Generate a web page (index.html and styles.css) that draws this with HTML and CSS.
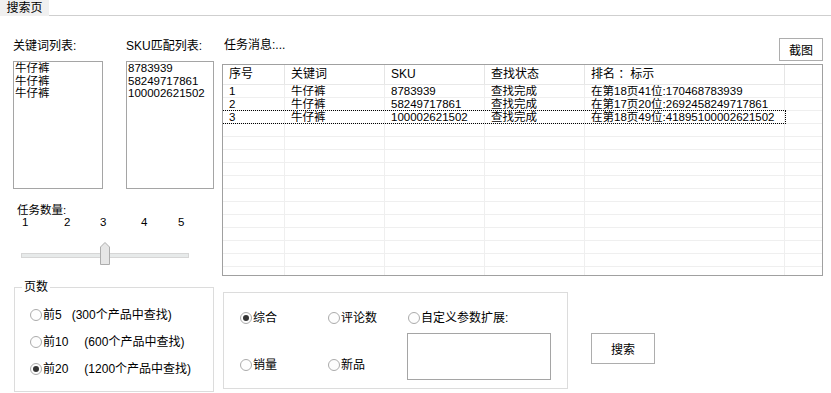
FILE: index.html
```
<!DOCTYPE html>
<html lang="zh-CN">
<head>
<meta charset="utf-8">
<title>搜索页</title>
<link rel="stylesheet" href="styles.css">
</head>
<body>
<div class="tabbar"><div class="tab">搜索页</div><div class="tabline"></div></div>
<div class="main">
  <div class="left">
    <div class="labels"><span class="lab-kw">关键词列表:</span><span>SKU匹配列表:</span></div>
    <div class="lists">
      <div class="listbox kw"><div>牛仔裤</div><div>牛仔裤</div><div>牛仔裤</div></div>
      <div class="listbox sku"><div>8783939</div><div>58249717861</div><div>100002621502</div></div>
    </div>
    <div class="count-label">任务数量:</div>
    <div class="ticks"><span>1</span><span>2</span><span>3</span><span>4</span><span>5</span></div>
    <svg class="slider" width="172" height="24" viewBox="0 0 172 24">
      <rect x="1.5" y="11.5" width="167" height="4" fill="#e7eaea" stroke="#d6d6d6"/>
      <polygon points="85,0.5 89.5,5 89.5,22.5 80.5,22.5 80.5,5" fill="#e6e6e6" stroke="#adadad"/>
    </svg>
    <fieldset class="group pages">
      <legend>页数</legend>
      <div class="radios">
        <div class="radio"><span class="dot"></span>前5<span class="hint h1">(300个产品中查找)</span></div>
        <div class="radio"><span class="dot"></span>前10<span class="hint h2">(600个产品中查找)</span></div>
        <div class="radio"><span class="dot on"></span>前20<span class="hint h2">(1200个产品中查找)</span></div>
      </div>
    </fieldset>
  </div>
  <div class="right">
    <div class="topbar">
      <span class="msg">任务消息:...</span>
      <button class="btn shot">截图</button>
    </div>
    <div class="table">
      <div class="thead">
        <div class="cells"><span>序号</span><span>关键词</span><span>SKU</span><span>查找状态</span><span>排名 ：标示</span></div><span class="fill"></span>
      </div>
      <div class="row"><div class="cells"><span>1</span><span>牛仔裤</span><span>8783939</span><span>查找完成</span><span>在第18页41位:170468783939</span></div><span class="fill"></span></div>
      <div class="row"><div class="cells"><span>2</span><span>牛仔裤</span><span>58249717861</span><span>查找完成</span><span>在第17页20位:2692458249717861</span></div><span class="fill"></span></div>
      <div class="row focus"><div class="cells"><span>3</span><span>牛仔裤</span><span>100002621502</span><span>查找完成</span><span>在第18页49位:41895100002621502</span></div><span class="fill"></span></div>
      <div class="row"><div class="cells"><span></span><span></span><span></span><span></span><span></span></div><span class="fill"></span></div>
      <div class="row"><div class="cells"><span></span><span></span><span></span><span></span><span></span></div><span class="fill"></span></div>
      <div class="row"><div class="cells"><span></span><span></span><span></span><span></span><span></span></div><span class="fill"></span></div>
      <div class="row"><div class="cells"><span></span><span></span><span></span><span></span><span></span></div><span class="fill"></span></div>
      <div class="row"><div class="cells"><span></span><span></span><span></span><span></span><span></span></div><span class="fill"></span></div>
      <div class="row"><div class="cells"><span></span><span></span><span></span><span></span><span></span></div><span class="fill"></span></div>
      <div class="row"><div class="cells"><span></span><span></span><span></span><span></span><span></span></div><span class="fill"></span></div>
      <div class="row"><div class="cells"><span></span><span></span><span></span><span></span><span></span></div><span class="fill"></span></div>
      <div class="row"><div class="cells"><span></span><span></span><span></span><span></span><span></span></div><span class="fill"></span></div>
      <div class="row"><div class="cells"><span></span><span></span><span></span><span></span><span></span></div><span class="fill"></span></div>
      <div class="row"><div class="cells"><span></span><span></span><span></span><span></span><span></span></div><span class="fill"></span></div>
      <div class="row"><div class="cells"><span></span><span></span><span></span><span></span><span></span></div><span class="fill"></span></div>
    </div>
    <div class="bottom">
      <div class="group sort">
        <div class="radio"><span class="dot on"></span>综合</div>
        <div class="radio"><span class="dot"></span>评论数</div>
        <div class="radio custom"><span class="dot"></span>自定义参数扩展:</div>
        <div class="radio low"><span class="dot"></span>销量</div>
        <div class="radio low"><span class="dot"></span>新品</div>
        <div class="textbox"></div>
      </div>
      <button class="btn search">搜索</button>
    </div>
  </div>
</div>
</body>
</html>
```

FILE: styles.css
```
html, body {
  margin: 0;
  padding: 0;
  background: #fff;
}
body {
  font-family: "Liberation Sans", "Noto Sans CJK SC", sans-serif;
  font-size: 12px;
  color: #000;
  width: 831px;
  height: 393px;
  overflow: hidden;
}
.tabbar {
  display: flex;
  height: 16px;
}
.tab {
  width: 49px;
  height: 16px;
  line-height: 16px;
  text-align: center;
  background: #f0f0f0;
}
.tabline {
  flex: 1;
  height: 16px;
  box-sizing: border-box;
  border-bottom: 1px solid #cfcfcf;
}
.main {
  display: flex;
  padding-top: 22px;
}
.left {
  margin-left: 13px;
  width: 201px;
}
.labels {
  display: flex;
  height: 16px;
  line-height: 16px;
  margin-bottom: 7px;
}
.lab-kw {
  width: 113px;
}
.lists {
  display: flex;
}
.listbox {
  box-sizing: border-box;
  height: 128px;
  border: 1px solid #a5a5a5;
  padding-left: 1px;
  font-size: 11.5px;
  line-height: 12.5px;
}
.listbox.kw {
  width: 90px;
  margin-right: 23px;
}
.listbox.sku {
  width: 88px;
}
.count-label {
  margin-top: 15px;
  margin-left: 4px;
  font-size: 11.5px;
  line-height: 12px;
}
.ticks {
  display: grid;
  grid-template-columns: 42px 36px 41px 37px 10px;
  padding-left: 9px;
  font-size: 11.5px;
  line-height: 12px;
}
.slider {
  display: block;
  margin-top: 14px;
  margin-left: 7px;
}
.group {
  box-sizing: border-box;
  border: 1px solid #dcdcdc;
}
fieldset.pages {
  margin: 13px 0 0 1px;
  width: 200px;
  padding: 0 0 14px 7px;
  min-width: 0;
}
fieldset.pages legend {
  padding: 0 2px;
  line-height: 16px;
  height: 16px;
}
.radios {
  display: flex;
  flex-direction: column;
  gap: 11px;
  margin-top: 12px;
  margin-left: 8px;
}
.radio {
  display: flex;
  align-items: center;
  height: 16px;
  line-height: 16px;
  white-space: nowrap;
}
.dot {
  box-sizing: border-box;
  width: 12px;
  height: 12px;
  border: 1px solid #ababab;
  border-radius: 50%;
  background: #fdfdfd;
  margin-right: 1px;
  flex: none;
}
.dot.on::after {
  content: "";
  display: block;
  width: 6px;
  height: 6px;
  margin: 2px;
  border-radius: 50%;
  background: #333;
}
.hint.h1 {
  margin-left: 10px;
}
.hint.h2 {
  margin-left: 16px;
}
.right {
  margin-left: 8px;
  width: 601px;
}
.topbar {
  display: flex;
  justify-content: space-between;
  align-items: flex-start;
  height: 23px;
}
.msg {
  margin-left: 2px;
  line-height: 14px;
}
.btn {
  box-sizing: border-box;
  border: 1px solid #adadad;
  background: #fff;
  font-family: inherit;
  font-size: 12px;
  color: #000;
  padding: 0;
}
.btn.shot {
  width: 44px;
  height: 23px;
}
.table {
  box-sizing: border-box;
  margin-top: 3px;
  height: 212px;
  border: 1px solid #a0a0a0;
  overflow: hidden;
  font-size: 11.5px;
}
.thead, .row {
  display: flex;
}
.cells {
  display: flex;
  width: 562px;
  flex: none;
}
.cells span {
  box-sizing: border-box;
  padding-left: 6px;
  white-space: nowrap;
}
.cells span:nth-child(1) { width: 62px; }
.cells span:nth-child(2) { width: 100px; }
.cells span:nth-child(3) { width: 100px; }
.cells span:nth-child(4) { width: 100px; }
.cells span:nth-child(5) { width: 200px; }
.fill {
  flex: 1;
}
.thead {
  box-sizing: border-box;
  height: 20px;
  line-height: 19px;
  font-size: 12px;
  border-bottom: 1px solid #e8e8e8;
}
.thead .cells span {
  border-right: 1px solid #e5e5e5;
}
.row {
  box-sizing: border-box;
  height: 13px;
  line-height: 12px;
  border-bottom: 1px solid #efefef;
}
.row .cells span {
  border-right: 1px solid #efefef;
}
.row.focus .cells {
  outline: 1px dotted #000;
  outline-offset: 0;
}
.bottom {
  display: flex;
  align-items: flex-start;
  margin-top: 16px;
}
.group.sort {
  margin-left: 1px;
  width: 345px;
  height: 97px;
  padding: 17px 0 0 16px;
  display: grid;
  grid-template-columns: 88px 79px 150px;
  grid-template-rows: 16px auto;
  align-items: start;
}
.radio.custom {
  margin-left: 1px;
}
.radio.low {
  margin-top: 31px;
}
.textbox {
  box-sizing: border-box;
  margin-top: 7px;
  width: 144px;
  height: 47px;
  border: 1px solid #a5a5a5;
}
.btn.search {
  margin-left: 23px;
  margin-top: 41px;
  width: 64px;
  height: 31px;
}
```
